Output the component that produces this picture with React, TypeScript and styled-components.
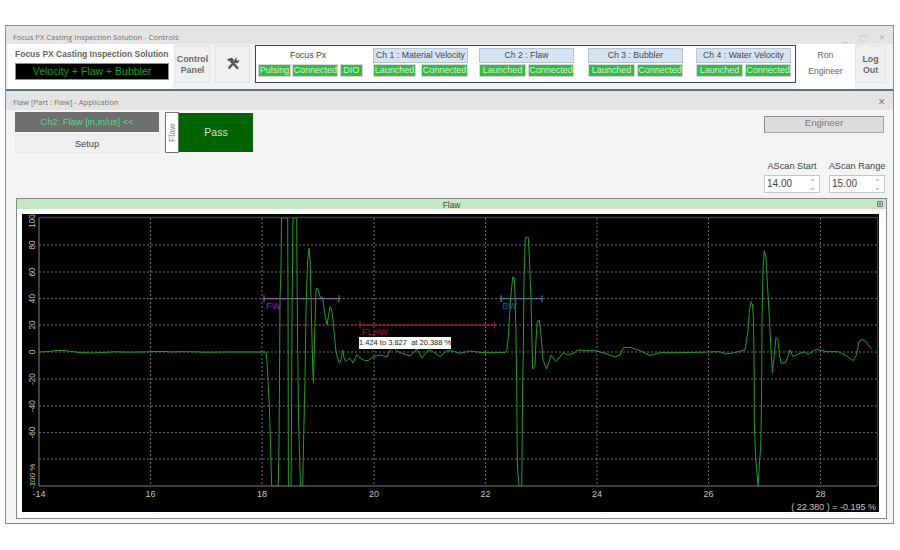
import React from 'react';
import styled, { createGlobalStyle } from 'styled-components';

const GlobalStyle = createGlobalStyle`
    html, body { margin: 0; padding: 0; background: #fff; }
    body { font-family: "Liberation Sans", Arial, sans-serif; width: 900px; height: 550px; overflow: hidden; }
`;

// Window frame
const Page = styled.div`
    padding: 25px 6px 0 5px;
`;
const Frame = styled.div`
    height: 499px;
    box-sizing: border-box;
    border: 1px solid #8a8f94;
    border-bottom-color: #7d8a8a;
    display: flex;
    flex-direction: column;
    background: #f4f4f4;
`;
const TitleBar = styled.div<{ $height: number }>`
    height: ${p => p.$height}px;
    flex: none;
    box-sizing: border-box;
    display: flex;
    align-items: center;
    justify-content: space-between;
    padding: 3px 8px 0 7px;
    background: #e4e4e4;
    color: #707070;
    font-family: "Open Sans", "Liberation Sans", sans-serif;
    font-size: 7.6px;
`;
const WindowButtons = styled.div`
    display: flex;
    gap: 13px;
    color: #b5b5b5;
    font-size: 10px;
    line-height: 10px;
`;
const CloseButton = styled.span`
    color: #666;
    font-size: 12px;
    line-height: 12px;
`;

// Top control strip
const ControlStrip = styled.div`
    height: 45px;
    flex: none;
    display: flex;
    align-items: flex-start;
    background: #f2f2f2;
    border-bottom: 2px solid #5d6f7d;
`;
const Brand = styled.div`
    width: 165px;
    height: 45px;
    flex: none;
    box-sizing: border-box;
    margin-left: 2px;
    padding: 4px 0 0 7px;
    background: #fff;
`;
const BrandName = styled.div`
    font-size: 8.5px;
    line-height: 12px;
    font-weight: 700;
    color: #646464;
    white-space: nowrap;
`;
const Mode = styled.div`
    width: 154px;
    height: 17px;
    margin-top: 3px;
    box-sizing: border-box;
    border: 1px solid #8e8e8e;
    background: #000;
    color: #10a510;
    font-size: 10.5px;
    line-height: 15px;
    text-align: center;
`;
const SquareButton = styled.div<{ $left: number; $width?: number }>`
    width: ${p => p.$width ?? 35}px;
    height: 38px;
    flex: none;
    margin: 1px 0 0 ${p => p.$left}px;
    padding-top: 2px;
    box-sizing: border-box;
    border: 1px solid #e4e4e4;
    background: #efefef;
    color: #6a6a6a;
    font-size: 8.8px;
    line-height: 11px;
    font-weight: 700;
    display: flex;
    align-items: center;
    justify-content: center;
    text-align: center;
`;
const ToolsIcon = styled.svg`
    width: 14px;
    height: 14px;
    margin-top: -2px;
`;
const StatusBox = styled.div`
    width: 541px;
    height: 38px;
    flex: none;
    margin: 1px 0 0 5px;
    box-sizing: border-box;
    border: 1px solid #444;
    background: #fff;
    display: flex;
    padding: 2px 0 0 2px;
`;
const Group = styled.div<{ $left: number; $width: number }>`
    width: ${p => p.$width}px;
    flex: none;
    margin-left: ${p => p.$left}px;
    display: flex;
    flex-direction: column;
    gap: 1px;
`;
const GroupTitle = styled.div<{ $plain?: boolean }>`
    height: 15px;
    box-sizing: border-box;
    padding-right: ${p => p.$plain ? 6 : 0}px;
    background: ${p => p.$plain ? 'transparent' : '#d6e3f3'};
    border: 1px solid ${p => p.$plain ? 'transparent' : '#b8c4d2'};
    color: #444;
    font-size: 8.7px;
    line-height: 13px;
    text-align: center;
    white-space: nowrap;
`;
const ChipRow = styled.div`
    display: flex;
    justify-content: space-between;
`;
const Chip = styled.div<{ $width: number }>`
    width: ${p => p.$width}px;
    height: 13px;
    box-sizing: border-box;
    border: 1px solid #d8d8d8;
    background: #36ba46;
    color: #d2f0d2;
    font-size: 9px;
    line-height: 11px;
    text-align: center;
    white-space: nowrap;
    overflow: hidden;
`;
const UserBlock = styled.div`
    width: 59px;
    height: 45px;
    flex: none;
    box-sizing: border-box;
    padding-bottom: 6px;
    background: #fff;
    color: #666;
    font-size: 8.6px;
    display: flex;
    flex-direction: column;
    align-items: center;
    justify-content: center;
    gap: 7px;
    line-height: 9px;
`;

// Application body
const Body = styled.div`
    flex: 1;
    display: flex;
    flex-direction: column;
    padding: 0 6px 5px 10px;
    min-height: 0;
`;
const TopArea = styled.div`
    height: 88px;
    flex: none;
    display: flex;
    justify-content: space-between;
`;
const LeftCluster = styled.div`
    display: flex;
    padding-top: 2px;
`;
const ChannelColumn = styled.div`
    width: 144px;
    margin-left: -1px;
    display: flex;
    flex-direction: column;
    gap: 2px;
`;
const ChannelButton = styled.div`
    height: 20px;
    background: #6e6e6e;
    color: #62d295;
    font-size: 9.4px;
    line-height: 20px;
    text-align: center;
`;
const SetupButton = styled.div`
    height: 19px;
    background: #f0f0f0;
    border: 1px solid #e8e8e8;
    box-sizing: border-box;
    color: #444;
    font-size: 9.2px;
    line-height: 18px;
    text-align: center;
`;
const VerticalTab = styled.div`
    width: 14px;
    height: 41px;
    margin-left: 6px;
    box-sizing: border-box;
    border: 1px solid #777;
    background: #fff;
    color: #888;
    font-size: 8.6px;
    writing-mode: vertical-rl;
    transform: rotate(180deg);
    display: flex;
    align-items: center;
    justify-content: center;
`;
const PassBox = styled.div`
    width: 74px;
    height: 39px;
    margin-top: 1px;
    background: #006400;
    color: #d5e5d5;
    font-size: 10.5px;
    line-height: 39px;
    text-align: center;
`;
const RightCluster = styled.div`
    width: 121px;
    margin-right: 2px;
    display: flex;
    flex-direction: column;
    align-items: flex-start;
`;
const RoleBox = styled.div`
    width: 120px;
    height: 17px;
    margin-top: 6px;
    box-sizing: border-box;
    border: 1px solid #8c8c8c;
    border-right-color: #a5a5a5;
    border-bottom-color: #a5a5a5;
    background: #dcdcdc;
    color: #777;
    font-size: 9.6px;
    line-height: 11px;
    text-align: center;
`;
const ScanFields = styled.div`
    display: flex;
    gap: 9px;
    margin-top: 28px;
`;
const ScanField = styled.div`
    width: 56px;
    display: flex;
    flex-direction: column;
    align-items: center;
    gap: 3px;
`;
const ScanLabel = styled.div`
    font-size: 9.2px;
    line-height: 11px;
    color: #444;
    white-space: nowrap;
`;
const ScanInput = styled.div`
    width: 56px;
    height: 18px;
    box-sizing: border-box;
    border: 1px solid #c6c6c6;
    background: #fff;
    color: #444;
    font-size: 10px;
    line-height: 16px;
    padding-left: 2px;
    display: flex;
    justify-content: space-between;
`;
const Spinner = styled.svg`
    width: 9px;
    height: 16px;
    margin-right: 2px;
`;

// Chart panel
const ChartPanel = styled.div`
    width: 871px;
    height: 321px;
    flex: none;
    box-sizing: border-box;
    border: 1px solid #85888c;
    background: #fff;
    display: flex;
    flex-direction: column;
`;
const ChartHeader = styled.div`
    height: 10px;
    flex: none;
    position: relative;
    background: #c3e8c3;
    color: #444;
    font-size: 8.4px;
    line-height: 12px;
    text-align: center;
`;
const ExpandIcon = styled.svg`
    position: absolute;
    right: 3px;
    top: 2px;
    width: 6px;
    height: 6px;
`;
const ChartFrame = styled.div`
    position: relative;
    width: 857px;
    height: 298px;
    margin: 5px 0 0 5px;
    background: #000;
`;
const ChartSvg = styled.svg`
    display: block;
    width: 857px;
    height: 298px;
`;
const AxisText = styled.text<{ $size?: number }>`
    fill: #c4c4c4;
    font-family: "Liberation Sans", Arial, sans-serif;
    font-size: ${p => p.$size ?? 9}px;
`;
const GateText = styled.text<{ $color: string }>`
    fill: ${p => p.$color};
    font-family: "Liberation Sans", Arial, sans-serif;
    font-size: 9.5px;
`;
const GateTip = styled.div`
    position: absolute;
    left: 337px;
    top: 123px;
    width: 92px;
    height: 12px;
    background: #fff;
    color: #222;
    font-size: 7.5px;
    line-height: 12px;
    text-align: center;
    white-space: pre;
`;

const CHANNELS = [
    { title: 'Ch 1 : Material Velocity', left: 9, launched: 44, connected: 48 },
    { title: 'Ch 2 : Flaw', left: 11, launched: 48, connected: 47 },
    { title: 'Ch 3 : Bubbler', left: 14, launched: 48, connected: 47 },
    { title: 'Ch 4 : Water Velocity', left: 13, launched: 48, connected: 47 },
];

const X_TICKS: [string, number][] = [['16', 150.5], ['18', 262], ['20', 374], ['22', 485.5], ['24', 597], ['26', 708.5], ['28', 820.5]];
const Y_TICKS: [string, number][] = [['80', 245], ['60', 272], ['40', 298.6], ['20', 325], ['0', 352], ['-20', 379], ['-40', 406], ['-60', 432.6], ['', 459]];

// traced from the picture, in page pixels
const TRACE = `39,352 48,351.5 56,350.6 64,350.6 72,351.5 80,352.6 92,353 104,352.4 116,351.8 128,352.2 150,351.8 162,351.4 172,352 184,351.6 205,352.2 232,352 266,352
    267,362 268,380 269.5,410 271.7,486 278.3,486 279,440 279.5,380 280,300 281,270 281.5,218 287.7,218 288,300 288.3,441 288.4,486 291,486 291.4,441 292,320 293,218 296.7,218
    297,270 297.6,340 298.6,420 300,470 300.6,486 302.7,486 303.6,440 305,380 306,310 307.5,262 309,248 310.2,262 311.5,320 312.8,370 313.5,383 314.5,340 316,290 316.7,288
    318,289 320,297 322.7,297.5 324.5,312 327,325 328.5,316 330,306.7 331.5,309 332.7,317 334.5,336 336,352 339,363 340.5,362 342.7,350 344,358 346,361.7 348,359.5 350,358.3
    353,363 356.7,355 360,358 363.3,360 368,360.7 373,357 380,355 387,357 392,346 398,351.7 404,354 410,356 417,349 422,358 428,350 432,351 440,356.7 447,350.7 452,351
    460,353.3 470,351 483,352.7 505.5,352.6 507,349 508.3,337 510.5,300 512.7,277 514.3,278 515.2,300 516,337 516.8,390 517,430 517.5,468 519,486 521.7,486 522.2,440 522.7,380
    523.3,353 524,280 525.3,237.3 528.3,237.5 529.5,260 531,300 531.7,330 532.7,369 535,366 536,340 537.3,321.7 539.3,320 540.8,332 543,360 546.7,369 549,362 551,355 553.5,358
    555.7,361.7 560,357 563.3,352.7 568,355 573,353.5 578,350 587,350.6 597,351 605,353.3 615,357 620,355 623.3,347.7 630,347.3 640,350.6 650,355.7 660,352.7 680,352.7 720,351.7
    726,354 733,353 745,350 747.7,333 749.5,310 751,301.7 752.5,305 753.5,320 754.3,380 754.3,420 755.5,455 757.5,480 758.3,486 759,470 760.7,447 761.3,415 761.7,380 762,320
    763,270 764.3,250.7 766,257 767.5,285 770,330 771.3,355 772.3,372.7 774,358 776,337.3 777.5,339 778.3,343 779.5,355 781,363 785,363 787.5,358 790,350 793,356.7 800,353.3
    805,351.7 808.3,354.3 813,351 816.7,349.3 826.7,351.7 838,351.7 845,355 853.3,360.7 856,356 859,342 861.7,339.3 865,340.7 871.7,349.3`;

function Gate({ x1, x2, y, color }: { x1: number; x2: number; y: number; color: string }) {
    return (
        <g stroke={color} strokeWidth="1">
            <line x1={x1} x2={x2} y1={y} y2={y} />
            <line x1={x1} x2={x1} y1={y - 3.5} y2={y + 3.5} />
            <line x1={x2} x2={x2} y1={y - 3.5} y2={y + 3.5} />
        </g>
    );
}

function AScanChart() {
    return (
        <ChartSvg viewBox="22 214 857 298">
            <defs>
                <clipPath id="plot"><rect x="39" y="218" width="838" height="268" /></clipPath>
            </defs>
            <g stroke="#6c6c6c" strokeWidth="1" strokeDasharray="2 2">
                {X_TICKS.map(([t, x]) => <line key={t} x1={x} x2={x} y1="218" y2="486" />)}
                {Y_TICKS.map(([t, y]) => <line key={y} x1="39" x2="877" y1={y} y2={y} />)}
            </g>
            <path d="M39 217.5H877.5V486" fill="none" stroke="#3e3e3e" strokeWidth="1.5" />
            <path d="M39 218V486H877" fill="none" stroke="#808080" strokeWidth="1" />

            <line x1="280" x2="360" y1="325" y2="325" stroke="#7a1818" strokeWidth="1" strokeDasharray="3 3" />
            <Gate x1={264} x2={339} y={298.7} color="#a070b8" />
            <Gate x1={360} x2={494.7} y={325} color="#b82030" />
            <Gate x1={501} x2={542} y={298.7} color="#5f8db0" />

            <polyline points={TRACE} fill="none" stroke="#21a029" strokeWidth="1" clipPath="url(#plot)" />

            <GateText $color="#a414a8" x="266" y="309">FW</GateText>
            <GateText $color="#b01020" x="362" y="335">FLAW</GateText>
            <GateText $color="#2f5590" x="502" y="309">BW</GateText>

            {X_TICKS.map(([t, x]) => <AxisText key={t} x={x} y="497" textAnchor="middle">{t}</AxisText>)}
            <AxisText x="39" y="497" textAnchor="middle">-14</AxisText>
            {Y_TICKS.map(([t, y]) => t && (
                <AxisText key={t} $size={8.2} textAnchor="middle" transform={`translate(35 ${y}) rotate(-90)`}>{t}</AxisText>
            ))}
            <AxisText $size={8.2} textAnchor="middle" transform="translate(35 221) rotate(-90)">100</AxisText>
            <AxisText $size={8} transform="translate(35 489) rotate(-90)">-100 %</AxisText>
            <AxisText x="876" y="510" textAnchor="end">( 22.380 ) = -0.195 %</AxisText>
        </ChartSvg>
    );
}

function ScanBox({ label, value }: { label: string; value: string }) {
    return (
        <ScanField>
            <ScanLabel>{label}</ScanLabel>
            <ScanInput>
                {value}
                <Spinner viewBox="0 0 9 16">
                    <path d="M3.5 4.5 4.5 3.5 5.5 4.5M3.5 12.5 4.5 13.5 5.5 12.5" fill="none" stroke="#555" strokeWidth="1" />
                </Spinner>
            </ScanInput>
        </ScanField>
    );
}

export default function App() {
    return (
        <Page>
            <GlobalStyle />
            <Frame>
                <TitleBar $height={18}>
                    <span>Focus PX Casting Inspection Solution - Controls</span>
                    <WindowButtons>
                        <span>_</span>
                        <span>□</span>
                        <span>×</span>
                    </WindowButtons>
                </TitleBar>
                <ControlStrip>
                    <Brand>
                        <BrandName>Focus PX Casting Inspection Solution</BrandName>
                        <Mode>Velocity + Flaw + Bubbler</Mode>
                    </Brand>
                    <SquareButton $left={2}>Control<br />Panel</SquareButton>
                    <SquareButton $left={5}>
                        <ToolsIcon viewBox="0 0 14 14">
                            <path d="M1 2.2 5.5.8 8 2.4 6.8 4.6 5 3.6 3 4.6z" fill="#555" />
                            <path d="M4.6 3.6 12 11.6M9.6 3.6 2.6 11.4" fill="none" stroke="#555" strokeWidth="2.3" />
                            <path d="M8.4 4.4 9.2 1.4 11 .8 10.4 3 11.6 3.8 13.2 2.8 13 5 10.4 6.4z" fill="#555" />
                        </ToolsIcon>
                    </SquareButton>
                    <StatusBox>
                        <Group $left={0} $width={106}>
                            <GroupTitle $plain>Focus Px</GroupTitle>
                            <ChipRow>
                                <Chip $width={33}>Pulsing</Chip>
                                <Chip $width={46}>Connected</Chip>
                                <Chip $width={23}>DIO</Chip>
                                <span />
                            </ChipRow>
                        </Group>
                        {CHANNELS.map(c => (
                            <Group key={c.title} $left={c.left} $width={95}>
                                <GroupTitle>{c.title}</GroupTitle>
                                <ChipRow>
                                    <Chip $width={c.launched - 1}>Launched</Chip>
                                    <Chip $width={c.connected - 1}>Connected</Chip>
                                </ChipRow>
                            </Group>
                        ))}
                    </StatusBox>
                    <UserBlock>
                        <span>Ron</span>
                        <span>Engineer</span>
                    </UserBlock>
                    <SquareButton $left={0} $width={31}>Log<br />Out</SquareButton>
                </ControlStrip>
                <TitleBar $height={19}>
                    <span>Flaw [Part : Flaw] - Application</span>
                    <CloseButton>×</CloseButton>
                </TitleBar>
                <Body>
                    <TopArea>
                        <LeftCluster>
                            <ChannelColumn>
                                <ChannelButton>Ch2: Flaw [in,in/us] &lt;&lt;</ChannelButton>
                                <SetupButton>Setup</SetupButton>
                            </ChannelColumn>
                            <VerticalTab>Flaw</VerticalTab>
                            <PassBox>Pass</PassBox>
                        </LeftCluster>
                        <RightCluster>
                            <RoleBox>Engineer</RoleBox>
                            <ScanFields>
                                <ScanBox label="AScan Start" value="14.00" />
                                <ScanBox label="AScan Range" value="15.00" />
                            </ScanFields>
                        </RightCluster>
                    </TopArea>
                    <ChartPanel>
                        <ChartHeader>
                            Flaw
                            <ExpandIcon viewBox="0 0 6 6">
                                <path d="M.5.5h5v5h-5zM3 .5v5M.5 3h5" fill="none" stroke="#778" strokeWidth="1" />
                            </ExpandIcon>
                        </ChartHeader>
                        <ChartFrame>
                            <AScanChart />
                            <GateTip>1.424 to 3.827  at 20.388 %</GateTip>
                        </ChartFrame>
                    </ChartPanel>
                </Body>
            </Frame>
        </Page>
    );
}
